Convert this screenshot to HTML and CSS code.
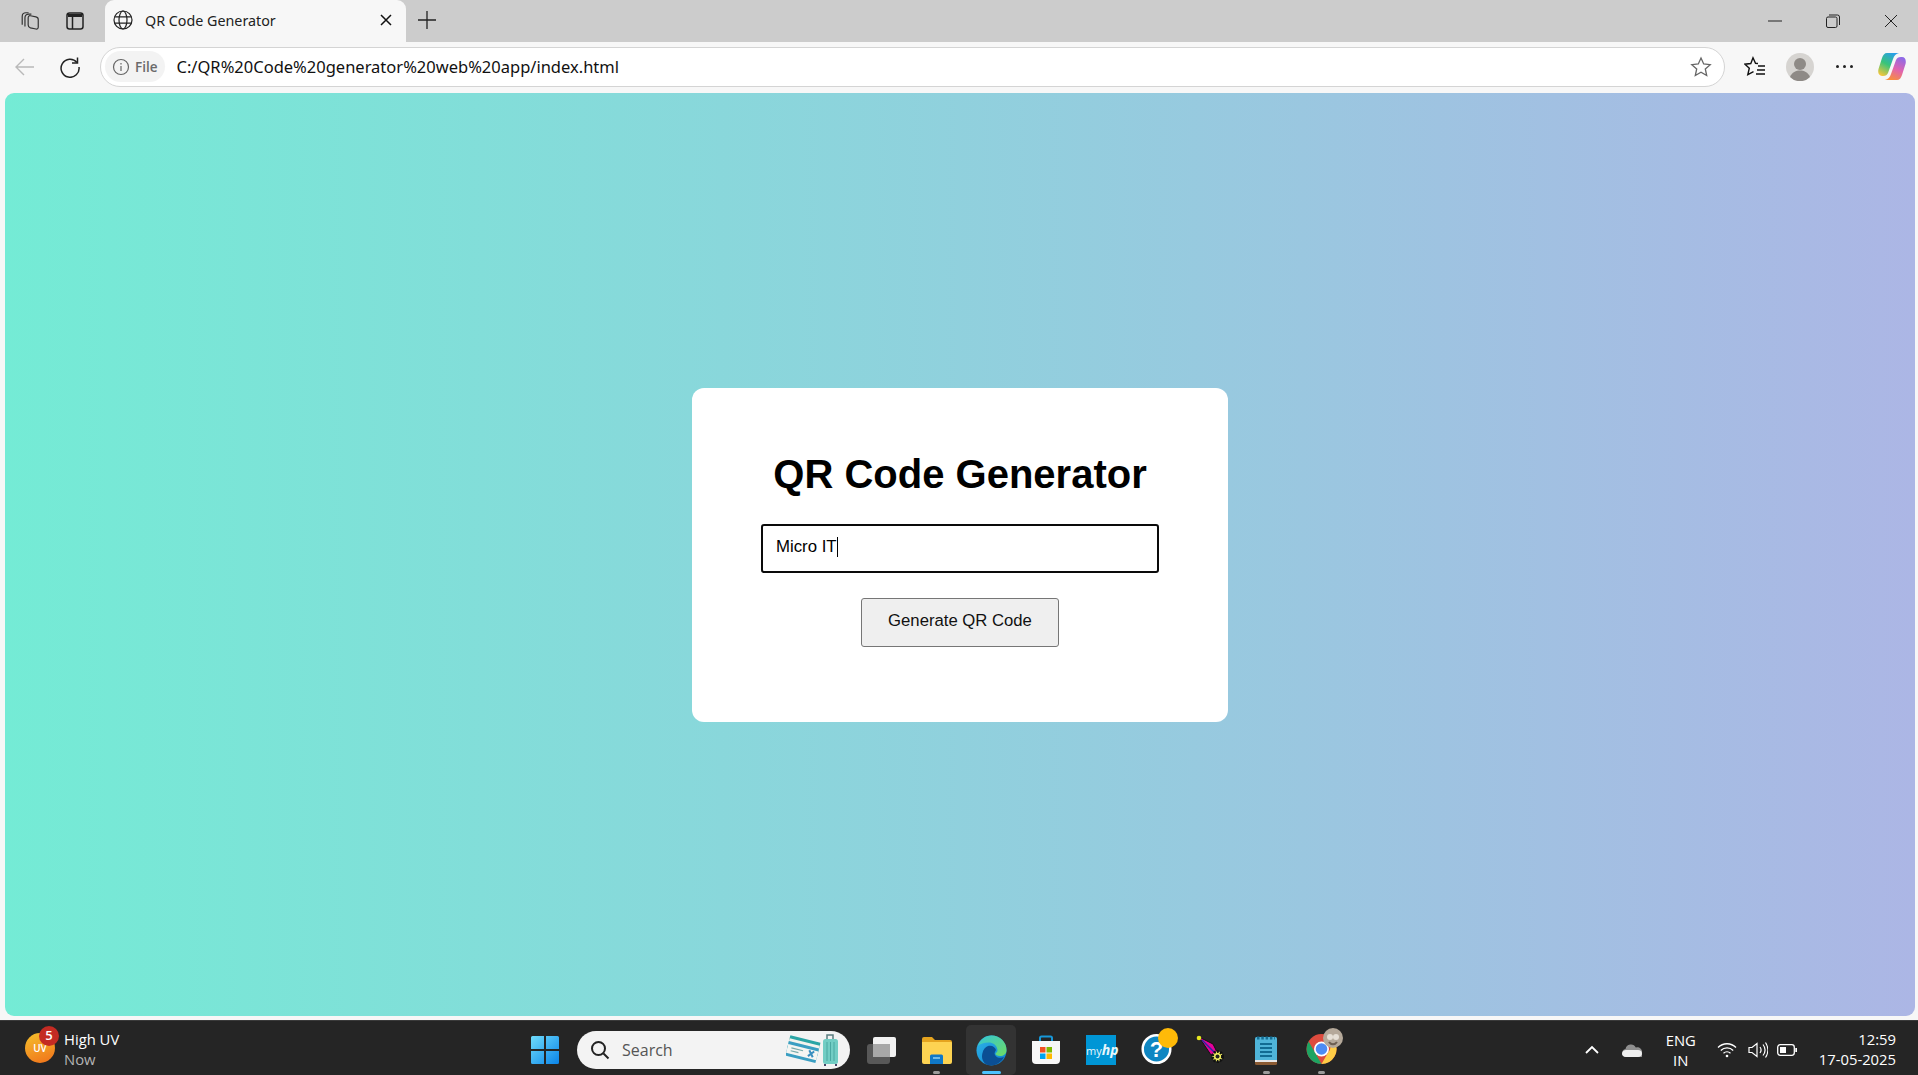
FILE: index.html
```html
<!DOCTYPE html>
<html lang="en">
<head>
  <meta charset="UTF-8">
  <title>QR Code Generator</title>
  <link rel="stylesheet" href="styles.css">
</head>
<body>
  <div class="tabstrip">
    <div class="strip-btn">
      <svg width="24" height="24" viewBox="0 0 24 24" fill="none" stroke="#333" stroke-width="1.300"><path d="M3.500 16V7C3.500 4.500 5 3 7.500 3h3"/><path d="M6.500 18V8.500C6.500 6 8 4.500 10.500 4.500h3"/><path d="M10 8.500C10 6.800 11 6 12.500 6.300l6 1.200c1.500.3 2.500 1.500 2.500 3v8c0 1.700-1 2.500-2.500 2.200l-6-1.200C11 19 10 17.800 10 16.300z"/></svg>
    </div>
    <div class="strip-btn strip-btn-b">
      <svg width="20" height="20" viewBox="0 0 20 20" fill="none"><rect x="2" y="2" width="16" height="16" rx="2.500" stroke="#222" stroke-width="1.500"/><path d="M3 3h14v3H3z" fill="#222"/><path d="M7.500 6v12" stroke="#222" stroke-width="1.500"/></svg>
    </div>
    <div class="tab">
      <svg class="globe" width="20" height="20" viewBox="0 0 20 20" fill="none" stroke="#222" stroke-width="1.200"><circle cx="10" cy="10" r="9"/><ellipse cx="10" cy="10" rx="4" ry="9"/><path d="M1.800 6.800h16.400M1.800 13.200h16.400"/></svg>
      <span class="tab-title">QR Code Generator</span>
      <svg class="tab-close" width="12" height="12" viewBox="0 0 12 12" stroke="#111" stroke-width="1.500"><path d="M1 1l10 10M11 1L1 11"/></svg>
    </div>
    <svg class="new-tab" width="20" height="20" viewBox="0 0 20 20" stroke="#222" stroke-width="1.300"><path d="M10 1v18M1 10h18"/></svg>
    <div class="win-controls">
      <svg class="win-min" width="14" height="14" viewBox="0 0 14 14" stroke="#222" stroke-width="1"><path d="M0 7h14"/></svg>
      <svg class="win-max" width="14" height="14" viewBox="0 0 14 14" fill="none" stroke="#222" stroke-width="1"><rect x="0.500" y="3" width="10.500" height="10.500" rx="1.500"/><path d="M3 1h8.500A2 2 0 0 1 13.500 3v8"/></svg>
      <svg class="win-close" width="14" height="14" viewBox="0 0 14 14" stroke="#222" stroke-width="1"><path d="M1 1l12 12M13 1L1 13"/></svg>
    </div>
  </div>

  <div class="toolbar">
    <svg class="tool-back" width="22" height="22" viewBox="0 0 22 22" fill="none" stroke="#b9b9b9" stroke-width="1.400"><path d="M20 11H2M10 3l-8 8 8 8"/></svg>
    <svg class="tool-reload" width="22" height="22" viewBox="0 0 22 22" fill="none" stroke="#222" stroke-width="1.500"><path d="M18 6.500A9 9 0 1 0 20 11"/><path d="M18.500 1.500v5.500H13"/></svg>
    <div class="address">
      <div class="site-chip">
        <svg width="18" height="18" viewBox="0 0 18 18" fill="none" stroke="#666" stroke-width="1.200"><circle cx="9" cy="9" r="7.500"/><path d="M9 8v5"/><path d="M9 5v1.400"/></svg>
        <span>File</span>
      </div>
      <span class="url">C:/QR%20Code%20generator%20web%20app/index.html</span>
      <svg class="fav-star" width="22" height="22" viewBox="0 0 22 22" fill="none" stroke="#666" stroke-width="1.300"><path d="M11 2l2.700 6 6.500.7-4.900 4.300 1.400 6.500-5.700-3.300-5.700 3.300 1.400-6.500L1.800 8.700 8.300 8z"/></svg>
    </div>
    <svg class="tool-favs" width="22" height="22" viewBox="0 0 22 22" fill="none" stroke="#111" stroke-width="1.400"><path d="M14 7.500l-2.500-.2L9 1.800 6.800 7.500 1 8.200l4.300 4-1.500 6.500 5.700-3"/><path d="M14 10h7M13 14h8M12 18h9"/></svg>
    <svg class="tool-profile" width="28" height="28" viewBox="0 0 28 28"><circle cx="14" cy="14" r="14" fill="#d6d4d1"/><circle cx="14" cy="11" r="6" fill="#8e8a86"/><path d="M4 24c2-5 6-6.500 10-6.500S22 19 24 24a14 14 0 0 1-20 0z" fill="#8e8a86"/></svg>
    <div class="tool-more"><i></i><i></i><i></i></div>
    <svg class="tool-copilot" width="28" height="27" viewBox="0 0 28 27">
      <defs>
        <linearGradient id="cpA" x1="0.700" y1="0" x2="0.200" y2="1"><stop offset="0" stop-color="#2a9fe8"/><stop offset=".5" stop-color="#38c47a"/><stop offset="1" stop-color="#f4c63c"/></linearGradient>
        <linearGradient id="cpB" x1="0.700" y1="0" x2="0.300" y2="1"><stop offset="0" stop-color="#8f6ae6"/><stop offset=".5" stop-color="#e063b0"/><stop offset="1" stop-color="#f9903a"/></linearGradient>
      </defs>
      <path d="M9 0H21C18 .5 16 3 15 6L10 20C9 22 8 23 5 23H4C1 23-.5 20 .5 16L4 5C5 2 6.500 0 9 0Z" fill="url(#cpA)"/>
      <path d="M19 27H7C10 26.500 12 24 13 21L18 7C19 5 20 4 23 4H24C27 4 28.500 7 27.500 11L24 22C23 25 21.500 27 19 27Z" fill="url(#cpB)"/>
    </svg>
  </div>

  <div class="page-wrap">
    <main class="viewport">
      <section class="card">
        <h1>QR Code Generator</h1>
        <div class="qr-input">Micro IT<span class="caret"></span></div>
        <button class="qr-btn" type="button">Generate QR Code</button>
      </section>
    </main>
  </div>

  <footer class="taskbar">
    <div class="widget">
      <div class="uv-badge">
        <span class="uv-text">UV</span>
        <span class="uv-count">5</span>
      </div>
      <div class="widget-text">
        <span>High UV</span>
        <span class="widget-sub">Now</span>
      </div>
    </div>

    <div class="task-btn">
      <svg width="30" height="30" viewBox="0 0 30 30">
        <defs><linearGradient id="winG" x1="0" y1="0" x2="1" y2="1"><stop offset="0" stop-color="#6fdcfb"/><stop offset="1" stop-color="#0a84e8"/></linearGradient></defs>
        <path d="M1 2.500A1.500 1.500 0 0 1 2.500 1H14v13H1zM16 1h11.500A1.500 1.500 0 0 1 29 2.500V14H16zM1 16h13v13H2.500A1.500 1.500 0 0 1 1 27.500zM16 16h13v11.500a1.500 1.500 0 0 1-1.500 1.500H16z" fill="url(#winG)"/>
      </svg>
    </div>

    <div class="search">
      <svg width="20" height="20" viewBox="0 0 20 20" fill="none" stroke="#222" stroke-width="2"><circle cx="8.500" cy="8.500" r="6.500"/><path d="M13.500 13.500l5 5"/></svg>
      <span class="search-label">Search</span>
      <svg class="search-art" width="54" height="34" viewBox="0 0 54 34">
        <g transform="rotate(14 18 18)">
          <rect x="1" y="6" width="31" height="14" fill="#2aa5a5"/>
          <rect x="1" y="9" width="31" height="8" fill="#f3f3ee"/>
          <rect x="1" y="12" width="31" height="15" fill="#3a9ec2"/>
          <rect x="1" y="15" width="31" height="9" fill="#f5f5f2"/>
          <path d="M5 18h12M5 21h8" stroke="#7aa" stroke-width="1.200"/>
          <path d="M23 16l5 6M28 16l-5 6" stroke="#3a8fc0" stroke-width="2"/>
        </g>
        <path d="M41 6V2h6v4" fill="none" stroke="#5b7d80" stroke-width="1.500"/>
        <rect x="37" y="6" width="15" height="25" rx="2.500" fill="#72cdc4"/>
        <path d="M41 9v19M44.500 9v19M48 9v19" stroke="#4aa8a2" stroke-width="1"/>
        <path d="M39 31v2M50 31v2" stroke="#446" stroke-width="2"/>
      </svg>
    </div>

    <div class="task-btn task-btn-first">
      <svg width="30" height="28" viewBox="0 0 30 28"><rect x="1" y="8" width="23" height="20" rx="3" fill="#585858"/><rect x="7" y="1" width="23" height="20" rx="2" fill="#f2f2f2"/><rect x="7" y="8" width="17" height="13" fill="#a8a8a8"/></svg>
    </div>
    <div class="task-btn">
      <svg width="31" height="28" viewBox="0 0 31 28">
        <path d="M1 3a2 2 0 0 1 2-2h8l3 3h15a2 2 0 0 1 2 2v3H1z" fill="#e5a41f"/>
        <path d="M1 6h29a1 1 0 0 1 1 1v19a2 2 0 0 1-2 2H3a2 2 0 0 1-2-2z" fill="#fdd352"/>
        <path d="M9 20a1.500 1.500 0 0 1 1.500-1.500h10A1.500 1.500 0 0 1 22 20v8H9z" fill="#0f78c8"/>
        <path d="M12 22h7" stroke="#8fd0f5" stroke-width="1.500"/>
      </svg>
      <i class="run-dot"></i>
    </div>
    <div class="task-btn task-btn-active">
      <svg width="31" height="31" viewBox="0 0 31 31">
        <defs>
          <linearGradient id="edgeA" x1="0" y1="0" x2="1" y2="1"><stop offset="0" stop-color="#2fb5e8"/><stop offset="1" stop-color="#0c7fd0"/></linearGradient>
          <linearGradient id="edgeB" x1="0" y1="0" x2="1" y2="1"><stop offset="0" stop-color="#33c6d8"/><stop offset="1" stop-color="#6fdc62"/></linearGradient>
        </defs>
        <circle cx="15.500" cy="15.500" r="15" fill="url(#edgeA)"/>
        <path d="M2 11C4 4 10 .5 15.500 .5 24 .5 30.500 7 30.500 15c0 4-3 6-6.500 6-3 0-4.500-1-4.500-2.500 2-1.500 2.500-3 1.500-5.500C19.500 9 16 7.500 12.500 7.500 8 7.500 4 9 2 11z" fill="url(#edgeB)"/>
        <path d="M12 11c4-1 7 1 8 4-1 2-2 3-1 5 1.500 3 6 3.500 9 2-3 5.500-8 8.500-13 8.500-2.500 0-4.500-1-6-2-3-3-3.500-7-2.500-10.500.7-3.500 3-6 5.500-7z" fill="#0b4f94"/>
      </svg>
      <i class="run-bar"></i>
    </div>
    <div class="task-btn">
      <svg width="30" height="30" viewBox="0 0 30 30">
        <path d="M9 8V3a1.500 1.500 0 0 1 1.500-1.500h9A1.500 1.500 0 0 1 21 3v5" fill="none" stroke="#1797d8" stroke-width="2"/>
        <path d="M1 6h28v19a4 4 0 0 1-4 4H5a4 4 0 0 1-4-4z" fill="#f7f7f7"/>
        <path d="M9 12h5.500v5.500H9z" fill="#f25022"/><path d="M15.500 12H21v5.500h-5.500z" fill="#7fba00"/><path d="M9 18.500h5.500V24H9z" fill="#00a4ef"/><path d="M15.500 18.500H21V24h-5.500z" fill="#ffb900"/>
      </svg>
    </div>
    <div class="task-btn">
      <div class="myhp">my<em>hp</em></div>
    </div>
    <div class="task-btn">
      <svg class="wide-icon" width="38" height="38" viewBox="0 0 38 38">
        <circle cx="15.500" cy="22" r="13.800" fill="#0e86c2" stroke="#fff" stroke-width="2.500"/>
        <text class="help-mark" x="15.500" y="30" text-anchor="middle">?</text>
        <circle cx="27" cy="11" r="10" fill="#ffba08"/>
      </svg>
    </div>
    <div class="task-btn">
      <svg width="30" height="30" viewBox="0 0 30 30">
        <path d="M3 2L17 9l5 10-7 1z" fill="#e5009b" stroke="#111" stroke-width="1"/>
        <path d="M6 5l12 12" stroke="#2a2aa0" stroke-width="1.400"/>
        <circle cx="3" cy="3" r="2.300" fill="#e6e620"/>
        <circle cx="21.500" cy="21.500" r="5" fill="#f0ee60" stroke="#111" stroke-width="2.800" stroke-dasharray="2 1.200"/>
        <circle cx="21.500" cy="21.500" r="2" fill="#222"/>
      </svg>
    </div>
    <div class="task-btn">
      <svg width="24" height="30" viewBox="0 0 24 30">
        <rect x="1" y="2" width="22" height="27" rx="1.500" fill="#4fb4d8"/>
        <path d="M1 26h22v2.500a1.500 1.500 0 0 1-1.500 1.500h-19A1.500 1.500 0 0 1 1 28.500z" fill="#8a5a32"/>
        <path d="M1 25h22v2H1z" fill="#e6e6e6"/>
        <path d="M3 3h18" stroke="#156e94" stroke-width="3" stroke-dasharray="2.500 1.800"/>
        <path d="M6 9h12M6 13h12M6 17h12M6 21h12" stroke="#116b92" stroke-width="2"/>
      </svg>
      <i class="run-dot"></i>
    </div>
    <div class="task-btn">
      <svg class="wide-icon" width="38" height="38" viewBox="0 0 38 38">
        <circle cx="15.500" cy="22" r="15" fill="#dd4b3e"/>
        <path d="M2.600 14.500l6.500 11.300 6.400 11.200a15 15 0 0 1-12.900-22.500z" fill="#1da462"/>
        <path d="M28.500 14.500a15 15 0 0 1-13 22.500l6.500-11.300a7.500 7.500 0 0 0 0-11.200z" fill="#ffcd46"/>
        <circle cx="15.500" cy="22" r="7.500" fill="#fff"/>
        <circle cx="15.500" cy="22" r="5.800" fill="#4c8bf5"/>
        <circle cx="27" cy="11" r="10" fill="#b5a99a"/>
        <circle cx="24" cy="10" r="3" fill="#e6e0d6"/>
        <circle cx="30" cy="10" r="3" fill="#e6e0d6"/>
        <path d="M23 15c2 3 6 3 8 0" fill="none" stroke="#6d5f52" stroke-width="2"/>
      </svg>
      <i class="run-dot"></i>
    </div>

    <div class="tray">
      <svg class="tray-caret" width="14" height="9" viewBox="0 0 14 9" fill="none" stroke="#fff" stroke-width="1.800"><path d="M1 8l6-6 6 6"/></svg>
      <svg class="tray-cloud" width="20" height="14" viewBox="0 0 20 14"><path d="M4 14a4 4 0 0 1-.5-7.900A5.500 5.500 0 0 1 13.800 4.500 4.800 4.800 0 0 1 20 10v4z" fill="#8f8f8f"/><path d="M4 14c-2.500 0-4-1.500-4-3.500S2 7 4 7h12c2.500 0 4 1.500 4 3.500S18.500 14 16 14z" fill="#efefef"/></svg>
      <div class="tray-lang"><span>ENG</span><span>IN</span></div>
      <svg class="tray-wifi" width="20" height="16" viewBox="0 0 20 16" fill="none" stroke="#fff" stroke-width="1.300"><path d="M1 5.500c5-5 13-5 18 0M3.800 8.500c3.500-3.400 9-3.400 12.400 0M6.500 11.200c2-1.800 5-1.800 7 0"/><circle cx="10" cy="14" r="1.300" fill="#fff" stroke="none"/></svg>
      <svg class="tray-vol" width="20" height="18" viewBox="0 0 20 18" fill="none" stroke="#fff" stroke-width="1.200"><path d="M1 6.500h3L9 2.500v13l-5-4H1z"/><path d="M12 6c1.300 1.800 1.300 4.200 0 6M15 3.500c2.500 3.300 2.500 7.700 0 11M17.500 1.500c3 4.500 3 10.500 0 15"/></svg>
      <svg class="tray-batt" width="20" height="12" viewBox="0 0 20 12" fill="none"><rect x=".7" y=".7" width="16.600" height="10.600" rx="2.500" stroke="#fff" stroke-width="1.300"/><rect x="3" y="3" width="6" height="6" fill="#fff"/><rect x="18.300" y="4" width="1.700" height="4" fill="#fff"/></svg>
      <div class="tray-clock"><span>12:59</span><span>17-05-2025</span></div>
    </div>
  </footer>
</body>
</html>
```

FILE: styles.css
```css
* {
  box-sizing: border-box;
}

html, body {
  margin: 0;
  height: 100%;
}

body {
  display: flex;
  flex-direction: column;
  height: 1075px;
  overflow: hidden;
  background: #f7f7f7;
  font-family: "Open Sans", "Noto Sans", sans-serif;
}

/* browser chrome */
.tabstrip {
  display: flex;
  align-items: flex-start;
  height: 42px;
  background: #cccccc;
  flex-shrink: 0;
}

.strip-btn {
  display: flex;
  align-items: center;
  justify-content: center;
  width: 22px;
  height: 42px;
  margin-left: 19px;
}

.strip-btn-b {
  margin-left: 23px;
}

.tab {
  display: flex;
  align-items: center;
  width: 301px;
  height: 42px;
  margin-left: 19px;
  padding: 0 14px 2px 8px;
  background: #f7f7f7;
  border-radius: 9px 9px 0 0;
}

.tab-title {
  margin-left: 12px;
  flex: 1;
  font-family: "Noto Sans", sans-serif;
  font-size: 14.300px;
  color: #222;
}

.new-tab {
  margin: 10px 0 0 11px;
}

.win-controls {
  display: flex;
  align-items: center;
  height: 42px;
  margin-left: auto;
  padding-right: 20px;
  gap: 44px;
}

.toolbar {
  display: flex;
  align-items: center;
  height: 51px;
  padding-bottom: 2px;
  background: #f7f7f7;
  flex-shrink: 0;
}

.tool-back {
  margin-left: 14px;
}

.tool-reload {
  margin-left: 23px;
}

.address {
  display: flex;
  align-items: center;
  width: 1625px;
  height: 40px;
  margin-left: 19px;
  padding: 0 12px 0 4px;
  background: #fff;
  border: 1px solid #d4d4d4;
  border-radius: 20px;
}

.site-chip {
  display: flex;
  align-items: center;
  gap: 5px;
  height: 31px;
  padding: 0 7px;
  background: #f3f3f3;
  border-radius: 16px;
  font-size: 13.500px;
  font-weight: 600;
  color: #6a6a6a;
}

.url {
  flex: 1;
  margin-left: 12px;
  font-family: "Noto Sans", sans-serif;
  font-size: 16.500px;
  color: #111;
}

.tool-favs {
  margin-left: 19px;
}

.tool-profile {
  margin-left: 20px;
}

.tool-more {
  display: flex;
  gap: 4px;
  margin-left: 22px;
}

.tool-more i {
  width: 3px;
  height: 3px;
  border-radius: 50%;
  background: #222;
}

.tool-copilot {
  margin-left: 25px;
}

/* page */
.page-wrap {
  flex: 1;
  padding: 0 3px 4px 5px;
}

.viewport {
  display: flex;
  align-items: center;
  justify-content: center;
  height: 100%;
  background: linear-gradient(to right, #74ebd5, #acb6e5);
  border-radius: 9px;
}

.card {
  display: flex;
  flex-direction: column;
  align-items: center;
  width: 536px;
  height: 334px;
  padding: 60px 66px 0;
  background: #fff;
  border-radius: 12px;
  font-family: "Liberation Sans", Arial, sans-serif;
}

.card h1 {
  margin: 0 0 24px;
  font-size: 40px;
  line-height: 52px;
  color: #000;
}

.qr-input {
  display: flex;
  align-items: center;
  width: 398px;
  height: 49px;
  padding: 0 13px 2px;
  border: 2.500px solid #0a0a0a;
  border-radius: 3px;
  font-size: 16.800px;
  color: #000;
}

.caret {
  width: 1px;
  height: 20px;
  background: #000;
}

.qr-btn {
  width: 198px;
  height: 49px;
  margin-top: 25px;
  padding-bottom: 3px;
  background: #efefef;
  border: 1px solid #767676;
  border-radius: 3px;
  font-family: inherit;
  font-size: 16.700px;
  color: #111;
}

/* windows taskbar */
.taskbar {
  display: flex;
  align-items: center;
  height: 55px;
  background: #252525;
  border-top: 1px solid #3a3a3a;
  color: #fff;
  flex-shrink: 0;
}

.widget {
  display: flex;
  align-items: center;
  width: 520px;
  padding-left: 25px;
  gap: 9px;
}

.uv-badge {
  position: relative;
  display: flex;
  align-items: center;
  justify-content: center;
  width: 30px;
  height: 30px;
  border-radius: 50%;
  background: linear-gradient(160deg, #f5c12c, #f0701a);
}

.uv-text {
  font-size: 10px;
  font-weight: 600;
  color: #fff;
}

.uv-count {
  position: absolute;
  top: -7px;
  right: -4px;
  width: 20px;
  height: 20px;
  border-radius: 50%;
  background: #c42b23;
  font-size: 13px;
  font-weight: 600;
  line-height: 19px;
  text-align: center;
}

.widget-text {
  display: flex;
  flex-direction: column;
  padding-top: 1px;
  font-size: 14.800px;
  line-height: 20px;
}

.widget-sub {
  color: #b4b4b4;
}

.task-btn {
  position: relative;
  display: flex;
  align-items: center;
  justify-content: center;
  width: 50px;
  height: 50px;
  margin-top: 4px;
}

.task-btn + .task-btn {
  margin-left: 5px;
}

.task-btn-first {
  margin-left: 6px;
}

.task-btn-active {
  background: #333333;
  border-radius: 5px;
}

.wide-icon {
  margin: -8px -7px 0 0;
}

.run-dot,
.run-bar {
  position: absolute;
  bottom: 1px;
  left: 50%;
  width: 7px;
  height: 3px;
  margin-left: -3.500px;
  border-radius: 2px;
  background: #9a9a9a;
}

.run-bar {
  width: 19px;
  margin-left: -9.500px;
  background: #4cc2ff;
}

.search {
  display: flex;
  align-items: center;
  width: 273px;
  height: 38px;
  margin: 4px 0 0 7px;
  padding: 0 10px 0 13px;
  background: #f3f3f3;
  border-radius: 19px;
}

.search-label {
  flex: 1;
  margin-left: 12px;
  font-size: 16px;
  color: #555;
}

.myhp {
  width: 30px;
  height: 30px;
  background: #0096d6;
  font-size: 11px;
  line-height: 30px;
  text-align: center;
  color: #e8f6fc;
}

.myhp em {
  font-size: 14px;
  font-weight: 700;
}

.help-mark {
  font-family: "Liberation Sans", Arial, sans-serif;
  font-size: 22px;
  font-weight: 700;
  fill: #fff;
}

.tray {
  display: flex;
  align-items: center;
  margin-left: auto;
  padding: 3px 22px 0 0;
}

.tray-caret {
  margin-right: 23px;
}

.tray-cloud {
  margin-right: 24px;
}

.tray-lang {
  display: flex;
  flex-direction: column;
  align-items: center;
  margin-right: 21px;
  font-size: 14.800px;
  line-height: 20px;
}

.tray-wifi {
  margin-right: 11px;
}

.tray-vol {
  margin-right: 9px;
}

.tray-batt {
  margin-right: 22px;
}

.tray-clock {
  display: flex;
  flex-direction: column;
  align-items: flex-end;
  margin-top: -2px;
  font-size: 14.800px;
  line-height: 20px;
}
```
